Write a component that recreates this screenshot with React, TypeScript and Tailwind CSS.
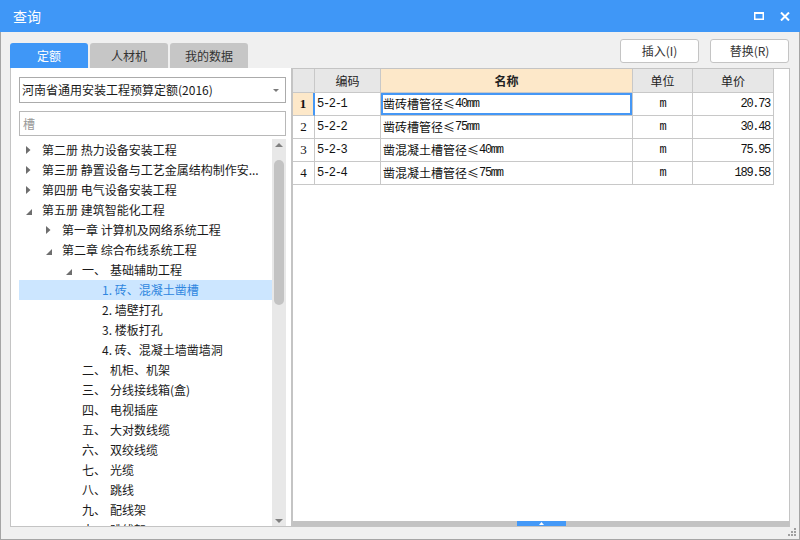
import React from 'react'

type TreeItem = {
  level: number
  kind: 'closed' | 'open' | 'leaf'
  num?: string
  text: string
  selected?: boolean
}

const tree: TreeItem[] = [
  { level: 0, kind: 'closed', text: '第二册 热力设备安装工程' },
  { level: 0, kind: 'closed', text: '第三册 静置设备与工艺金属结构制作安...' },
  { level: 0, kind: 'closed', text: '第四册 电气设备安装工程' },
  { level: 0, kind: 'open', text: '第五册 建筑智能化工程' },
  { level: 1, kind: 'closed', text: '第一章 计算机及网络系统工程' },
  { level: 1, kind: 'open', text: '第二章 综合布线系统工程' },
  { level: 2, kind: 'open', num: '一、', text: '基础辅助工程' },
  { level: 3, kind: 'leaf', text: '1. 砖、混凝土凿槽', selected: true },
  { level: 3, kind: 'leaf', text: '2. 墙壁打孔' },
  { level: 3, kind: 'leaf', text: '3. 楼板打孔' },
  { level: 3, kind: 'leaf', text: '4. 砖、混凝土墙凿墙洞' },
  { level: 2, kind: 'leaf', num: '二、', text: '机柜、机架' },
  { level: 2, kind: 'leaf', num: '三、', text: '分线接线箱(盒)' },
  { level: 2, kind: 'leaf', num: '四、', text: '电视插座' },
  { level: 2, kind: 'leaf', num: '五、', text: '大对数线缆' },
  { level: 2, kind: 'leaf', num: '六、', text: '双绞线缆' },
  { level: 2, kind: 'leaf', num: '七、', text: '光缆' },
  { level: 2, kind: 'leaf', num: '八、', text: '跳线' },
  { level: 2, kind: 'leaf', num: '九、', text: '配线架' },
  { level: 2, kind: 'leaf', num: '十、', text: '跳线架' },
]

const indent = ['pl-0', 'pl-[20px]', 'pl-[40px]', 'pl-[60px]']

const rows = [
  { no: '1', code: '5-2-1', name: '凿砖槽管径', spec: '40mm', unit: 'm', price: '20.73' },
  { no: '2', code: '5-2-2', name: '凿砖槽管径', spec: '75mm', unit: 'm', price: '30.48' },
  { no: '3', code: '5-2-3', name: '凿混凝土槽管径', spec: '40mm', unit: 'm', price: '75.95' },
  { no: '4', code: '5-2-4', name: '凿混凝土槽管径', spec: '75mm', unit: 'm', price: '189.58' },
]

const mono = "font-['Liberation_Mono',monospace] text-[12px] tracking-[-1.3px]"

function Arrow({ kind }: { kind: TreeItem['kind'] }) {
  if (kind === 'closed') {
    return (
      <svg width="5" height="8" viewBox="0 0 5 8">
        <path d="M0 0 L4.5 4 L0 8 Z" fill="#6e6e6e" />
      </svg>
    )
  }
  if (kind === 'open') {
    return (
      <svg width="6" height="6" viewBox="0 0 6 6" className="mt-[4px]">
        <path d="M6 0 L6 6 L0 6 Z" fill="#6e6e6e" />
      </svg>
    )
  }
  return null
}

function TreeRow({ item }: { item: TreeItem }) {
  return (
    <div
      className={`h-[20px] shrink-0 flex items-center whitespace-nowrap ${indent[item.level]} ${
        item.selected ? 'bg-[#cce6ff] text-[#2f86e0]' : 'text-[#1a1a1a]'
      }`}
    >
      <div className="w-[23px] h-[20px] pl-[7px] flex items-center shrink-0">
        <Arrow kind={item.kind} />
      </div>
      {item.num && <span className="inline-block w-[28px]">{item.num}</span>}
      <span>{item.text}</span>
    </div>
  )
}

export default function App() {
  return (
    <div className="w-[800px] h-[540px] flex flex-col bg-[#f0f0f0] font-['Noto_Sans_CJK_SC',sans-serif] text-[12px] text-[#222] overflow-hidden">
      {/* title bar */}
      <div className="h-[32px] shrink-0 bg-[#3f97f7] flex items-center pl-[13px] pr-[10px]">
        <span className="text-white text-[14px]">查询</span>
        <div className="ml-auto flex items-center gap-[16px]">
          <svg width="10" height="8" viewBox="0 0 10 8">
            <rect x="0.75" y="1" width="8.5" height="6.25" fill="none" stroke="#fff" strokeWidth="1.5" />
            <rect x="0" y="0" width="10" height="2" fill="#fff" />
          </svg>
          <svg width="10" height="9" viewBox="0 0 10 9">
            <path d="M1 0.5 L9 8.5 M9 0.5 L1 8.5" stroke="#fff" strokeWidth="2" />
          </svg>
        </div>
      </div>

      <div className="relative flex-1 min-h-0 flex border-x border-b border-[#a5a5a5] px-[9px] pb-[12px]">
        {/* left column */}
        <div className="w-[282px] shrink-0 min-h-0 flex flex-col pt-[11px]">
          <div className="h-[25px] shrink-0 flex gap-[2px]">
            <div className="w-[78px] rounded-t-[3px] bg-[#3f97f7] text-white flex items-center justify-center">定额</div>
            <div className="w-[78px] rounded-t-[3px] bg-[#c6c6c6] text-[#333] flex items-center justify-center">人材机</div>
            <div className="w-[78px] rounded-t-[3px] bg-[#c6c6c6] text-[#333] flex items-center justify-center">我的数据</div>
          </div>
          <div className="flex-1 min-h-0 bg-white border-x border-b border-[#c4c4c4] pl-[8px] pr-[5px] flex flex-col">
            <div className="mt-[9px] h-[26px] shrink-0 border border-[#ababab] flex items-center pl-[2px] pr-[6px]">
              <span className="text-[#1a1a1a]">河南省通用安装工程预算定额(2016)</span>
              <svg width="6" height="3" viewBox="0 0 6 3" className="ml-auto">
                <path d="M0 0 L6 0 L3 3 Z" fill="#7a7a7a" />
              </svg>
            </div>
            <div className="mt-[8px] h-[25px] shrink-0 border border-[#b8b8b8] flex items-center pl-[3px] text-[#999]">槽</div>
            <div className="mt-[3px] flex-1 min-h-0 flex overflow-hidden">
              <div className="flex-1 min-w-0 pt-[1px] overflow-hidden">
                {tree.map((item, i) => (
                  <TreeRow key={i} item={item} />
                ))}
              </div>
              <div className="w-[14px] shrink-0 bg-[#e8e8e8] flex flex-col items-center pt-[3px] pb-[3px]">
                <svg width="8" height="5" viewBox="0 0 8 5">
                  <path d="M0 5 L4 1 L8 5 Z" fill="#808080" />
                </svg>
                <div className="mt-[13px] w-[10px] h-[145px] rounded-full bg-[#c3c3c3]" />
                <svg width="8" height="4" viewBox="0 0 8 4" className="mt-auto">
                  <path d="M0 0 L8 0 L4 4 Z" fill="#808080" />
                </svg>
              </div>
            </div>
          </div>
        </div>

        {/* right column */}
        <div className="flex-1 min-w-0 min-h-0 flex flex-col pt-[7px]">
          <div className="h-[24px] shrink-0 flex justify-end gap-[11px] pr-[1px]">
            <button className="w-[79px] h-[24px] bg-white border border-[#c4c4c4] rounded-[3px] text-[#333]">插入(I)</button>
            <button className="w-[79px] h-[24px] bg-white border border-[#c4c4c4] rounded-[3px] text-[#333]">替换(R)</button>
          </div>
          <div className="mt-[5px] flex-1 min-h-0 bg-white border border-[#c4c4c4] flex flex-col">
            <div className="flex h-[24px] shrink-0">
              <div className="w-[22px] bg-[#e7e7e7] border-r border-b border-[#c8c8c8]" />
              <div className="w-[66px] bg-[#e7e7e7] border-r border-b border-[#c8c8c8] flex items-center justify-center">编码</div>
              <div className="w-[252px] bg-[#fde8c9] border-r border-b border-[#c8c8c8] flex items-center justify-center font-bold">名称</div>
              <div className="w-[60px] bg-[#e7e7e7] border-r border-b border-[#c8c8c8] flex items-center justify-center">单位</div>
              <div className="w-[81px] bg-[#e7e7e7] border-r border-b border-[#c8c8c8] flex items-center justify-center">单价</div>
            </div>
            {rows.map((r, i) => (
              <div key={r.code} className="flex h-[23px] shrink-0 text-[#111]">
                <div
                  className={`w-[22px] border-b border-[#c8c8c8] flex items-center justify-center font-['Liberation_Serif',serif] text-[13px] ${
                    i === 0 ? 'bg-[#fde8c9] font-bold border-r-2 border-r-[#4597f5]' : 'border-r'
                  }`}
                >
                  {r.no}
                </div>
                <div className={`w-[66px] border-r border-b border-[#c8c8c8] flex items-center pl-[2px] ${mono}`}>{r.code}</div>
                <div
                  className={`w-[252px] border-r border-b border-[#c8c8c8] flex items-center pl-[2px] ${
                    i === 0 ? 'shadow-[inset_0_0_0_2px_#4597f5]' : ''
                  }`}
                >
                  <span>{r.name}</span>
                  <span>≤</span>
                  <span className={mono}>{r.spec}</span>
                </div>
                <div className={`w-[60px] border-r border-b border-[#c8c8c8] flex items-center justify-center ${mono}`}>{r.unit}</div>
                <div className={`w-[81px] border-r border-b border-[#c8c8c8] flex items-center justify-end pr-[3px] ${mono}`}>{r.price}</div>
              </div>
            ))}
            <div className="mt-auto h-[5px] shrink-0 bg-[#c3c3c3] flex justify-center">
              <div className="w-[49px] h-[5px] bg-[#4499f7] flex items-center justify-center">
                <svg width="5" height="3" viewBox="0 0 5 3">
                  <path d="M0 3 L2.5 0 L5 3 Z" fill="#fff" />
                </svg>
              </div>
            </div>
          </div>
        </div>

        {/* resize grip */}
        <svg width="9" height="9" viewBox="0 0 9 9" className="absolute right-[2px] bottom-[2px]">
          <rect x="6" y="0" width="2" height="2" fill="#a0a0a0" />
          <rect x="3" y="3" width="2" height="2" fill="#a0a0a0" />
          <rect x="6" y="3" width="2" height="2" fill="#a0a0a0" />
          <rect x="0" y="6" width="2" height="2" fill="#a0a0a0" />
          <rect x="3" y="6" width="2" height="2" fill="#a0a0a0" />
          <rect x="6" y="6" width="2" height="2" fill="#a0a0a0" />
        </svg>
      </div>
    </div>
  )
}
